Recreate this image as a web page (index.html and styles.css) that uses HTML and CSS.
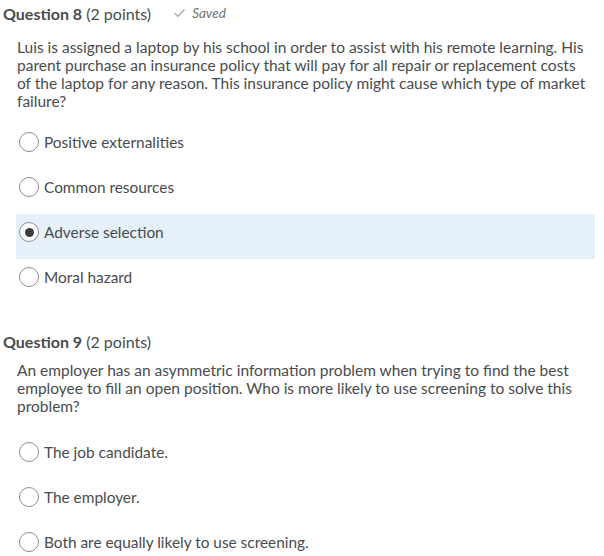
FILE: index.html
```html
<!DOCTYPE html>
<html>
<head>
<meta charset="utf-8">
<link rel="stylesheet" href="styles.css">
</head>
<body>
<section class="question q8">
  <div class="q-head">
    <h2 class="q-title"><strong>Question 8</strong> (2 points)</h2>
    <span class="saved">
      <svg class="check" width="13" height="10" viewBox="0 0 13 10"><path d="M1.5 5.2 L4.8 8.3 L11.5 1.5" fill="none" stroke="#a4a8ab" stroke-width="1.4"/></svg>
      Saved
    </span>
  </div>
  <p class="q-body">Luis is assigned a laptop by his school in order to assist with his remote learning. His parent purchase an insurance policy that will pay for all repair or replacement costs of the laptop for any reason. This insurance policy might cause which type of market failure?</p>
  <ul class="options">
    <li class="option"><span class="radio"></span>Positive externalities</li>
    <li class="option"><span class="radio"></span>Common resources</li>
    <li class="option selected"><span class="radio checked"></span>Adverse selection</li>
    <li class="option"><span class="radio"></span>Moral hazard</li>
  </ul>
</section>
<section class="question q9">
  <div class="q-head">
    <h2 class="q-title"><strong>Question 9</strong> (2 points)</h2>
  </div>
  <p class="q-body">An employer has an asymmetric information problem when trying to find the best employee to fill an open position. Who is more likely to use screening to solve this problem?</p>
  <ul class="options">
    <li class="option"><span class="radio"></span>The job candidate.</li>
    <li class="option"><span class="radio"></span>The employer.</li>
    <li class="option"><span class="radio"></span>Both are equally likely to use screening.</li>
  </ul>
</section>
</body>
</html>
```
FILE: styles.css
```css
html, body {
  margin: 0;
  padding: 0;
  background: #ffffff;
}
body {
  font-family: Lato, "Open Sans", sans-serif;
  color: #494c4e;
  width: 604px;
  height: 556px;
  overflow: hidden;
}
.question {
  display: flex;
  flex-direction: column;
}
.q-head {
  display: flex;
  align-items: center;
  gap: 22px;
  height: 26px;
  padding-left: 3px;
}
.q-title {
  margin: 0;
  font-size: 16px;
  font-weight: 400;
  line-height: 26px;
  color: #494c4e;
  padding-top: 1px;
}
.q-title strong {
  font-weight: 700;
}
.saved {
  display: flex;
  align-items: center;
  gap: 6px;
  font-size: 13.5px;
  font-style: italic;
  color: #6e7376;
  margin-top: -1px;
}
.q-body {
  margin: 12px 0 0 17px;
  width: 572px;
  font-size: 15.5px;
  line-height: 18px;
}
.options {
  list-style: none;
  margin: 14px 0 0 16px;
  padding: 0;
  width: 579px;
}
.option {
  display: flex;
  align-items: center;
  gap: 5px;
  height: 18px;
  padding: 9px 0 18px 3px;
  font-size: 15.4px;
  line-height: 18px;
}
.option.selected {
  background: #e6f0fa;
}
.radio {
  box-sizing: border-box;
  width: 20px;
  height: 20px;
  border: 1px solid #8c9094;
  border-radius: 50%;
  background: #fff;
  display: flex;
  align-items: center;
  justify-content: center;
  flex: none;
}
.radio.checked::after {
  content: "";
  width: 9px;
  height: 9px;
  border-radius: 50%;
  background: #3a3d40;
}
.q9 {
  margin-top: 24px;
}
.q9 .q-body {
  margin-top: 7px;
}
.q9 .options {
  margin-top: 19px;
}
```
